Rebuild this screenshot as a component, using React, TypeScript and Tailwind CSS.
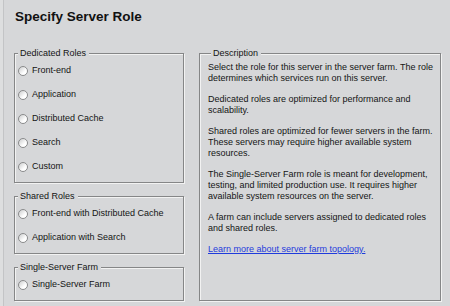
import React from "react";

const bg = "bg-[#d6d7d9]";

function Radio({ label }: { label: string }) {
  return (
    <label className="flex h-6 items-center gap-[4px] pl-[3px]">
      <span className="h-[10px] w-[10px] shrink-0 rounded-full border border-[#8a8b8c] bg-[linear-gradient(135deg,#cbcccd,#ffffff_65%)]" />
      <span className="whitespace-nowrap">{label}</span>
    </label>
  );
}

function Group({
  title,
  className = "",
  children,
}: {
  title: string;
  className?: string;
  children: React.ReactNode;
}) {
  return (
    <fieldset
      className={`border border-[#858687] shadow-[1px_1px_0_#f2f2f2,inset_1px_1px_0_#f2f2f2] ${className}`}
    >
      <legend className={`ml-[3px] px-[2px] pr-[3px] leading-[11px] ${bg}`}>{title}</legend>
      {children}
    </fieldset>
  );
}

export default function App() {
  return (
    <div
      className={`flex h-[306px] w-[450px] overflow-hidden ${bg} text-[9px] text-[#141414]`}
      style={{ fontFamily: '"Liberation Sans", Arial, sans-serif' }}
    >
      <div className="w-[3px] bg-[#dddedf]" />
      <div className="w-px bg-[#c3c4c6]" />
      <div className="flex flex-col pl-[10px] pt-[8px]">
        <h1 className="pl-[1px] text-[13.5px] font-bold leading-[18px] text-[#111]">Specify Server Role</h1>

        <div className="mt-[22px] grid grid-cols-[170px_242px] gap-[15px]">
          <div className="flex flex-col gap-[8px]">
            <Group title="Dedicated Roles" className="pb-[3px]">
              <Radio label="Front-end" />
              <Radio label="Application" />
              <Radio label="Distributed Cache" />
              <Radio label="Search" />
              <Radio label="Custom" />
            </Group>
            <Group title="Shared Roles" className="pb-[3px]">
              <Radio label="Front-end with Distributed Cache" />
              <Radio label="Application with Search" />
            </Group>
            <Group title="Single-Server Farm" className="pb-[3px]">
              <Radio label="Single-Server Farm" />
            </Group>
          </div>

          <Group title="Description" className="pl-[8px] pt-[3px]">
            <div className="flex flex-col gap-[10px] whitespace-nowrap leading-[11px]">
              <p>
                Select the role for this server in the server farm. The role
                <br />
                determines which services run on this server.
              </p>
              <p>
                Dedicated roles are optimized for performance and
                <br />
                scalability.
              </p>
              <p>
                Shared roles are optimized for fewer servers in the farm.
                <br />
                These servers may require higher available system
                <br />
                resources.
              </p>
              <p>
                The Single-Server Farm role is meant for development,
                <br />
                testing, and limited production use. It requires higher
                <br />
                available system resources on the server.
              </p>
              <p>
                A farm can include servers assigned to dedicated roles
                <br />
                and shared roles.
              </p>
              <p>
                <a href="#" className="text-[#1f3bdc] underline">
                  Learn more about server farm topology.
                </a>
              </p>
            </div>
          </Group>
        </div>
      </div>
    </div>
  );
}
